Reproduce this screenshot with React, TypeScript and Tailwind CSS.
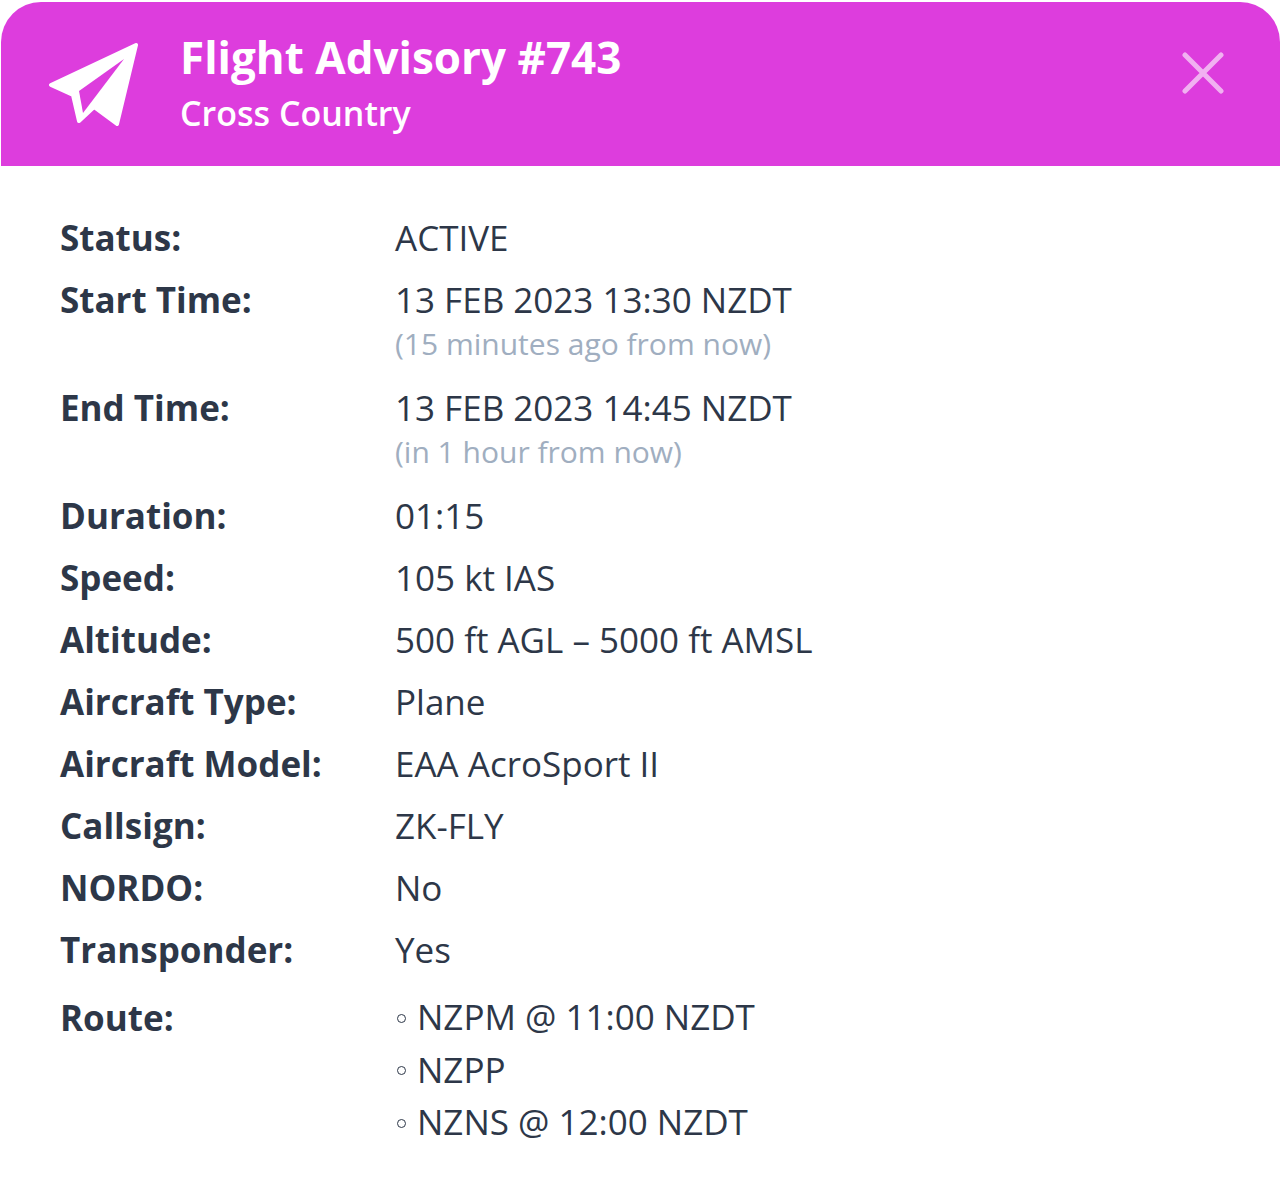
import React from "react";

const rows = [
  { label: "Status:", value: "ACTIVE" },
  { label: "Start Time:", value: "13 FEB 2023 13:30 NZDT", note: "(15 minutes ago from now)" },
  { label: "End Time:", value: "13 FEB 2023 14:45 NZDT", note: "(in 1 hour from now)" },
  { label: "Duration:", value: "01:15" },
  { label: "Speed:", value: "105 kt IAS" },
  { label: "Altitude:", value: "500 ft AGL – 5000 ft AMSL" },
  { label: "Aircraft Type:", value: "Plane" },
  { label: "Aircraft Model:", value: "EAA AcroSport II" },
  { label: "Callsign:", value: "ZK-FLY" },
  { label: "NORDO:", value: "No" },
  { label: "Transponder:", value: "Yes" },
];

const route = ["NZPM @ 11:00 NZDT", "NZPP", "NZNS @ 12:00 NZDT"];

function PlaneIcon() {
  return (
    <svg viewBox="0 0 90 86" className="w-[90px] h-[86px] shrink-0">
      <path d="M88 4 L3 44 L25 54 L31 80 L46 66 L69 83 Z" fill="#fff" stroke="#fff" strokeWidth="4" strokeLinejoin="round" />
      <path d="M76 18 L31 50 L35 72 Z" fill="#dd3ddd" />
    </svg>
  );
}

export default function App() {
  return (
    <div className="w-[1280px] h-[1198px] bg-white pt-[2px] pl-[1px] text-[#2d3748] font-['Open_Sans',sans-serif]">
      {/* Header */}
      <div className="flex items-center h-[164px] bg-[#dd3ddd] rounded-t-[40px] pl-[47px] pr-[56px] text-white">
        <PlaneIcon />
        <div className="ml-[42px] flex-1">
          <h1 className="text-[44px] leading-[56px] font-bold mt-[2px]">Flight Advisory #743</h1>
          <p className="text-[34px] leading-[56px] font-semibold">Cross Country</p>
        </div>
        <svg viewBox="0 0 42 42" className="w-[42px] h-[42px] opacity-60 mb-[22px]" stroke="#fff" strokeWidth="5" strokeLinecap="round">
          <path d="M3 3 L39 39 M39 3 L3 39" />
        </svg>
      </div>

      {/* Details */}
      <div className="pl-[59px] pt-[45px] text-[35px]">
        {rows.map((row) => (
          <div key={row.label} className="flex pb-[8px]">
            <div className="w-[335px] font-bold leading-[54px]">{row.label}</div>
            <div className="leading-[54px]">
              {row.value}
              {row.note && <div className="text-[30px] leading-[34px] pb-[12px] text-[#a0aec0]">{row.note}</div>}
            </div>
          </div>
        ))}
        <div className="flex pt-[6px]">
          <div className="w-[335px] font-bold leading-[54px]">Route:</div>
          <ul>
            {route.map((stop) => (
              <li key={stop} className="flex items-center leading-[52.5px]">
                <span className="w-[9px] h-[9px] ml-[2px] mt-[2px] rounded-full border-[1.5px] border-[#2d3748] mr-[11px]" />
                {stop}
              </li>
            ))}
          </ul>
        </div>
      </div>
    </div>
  );
}
